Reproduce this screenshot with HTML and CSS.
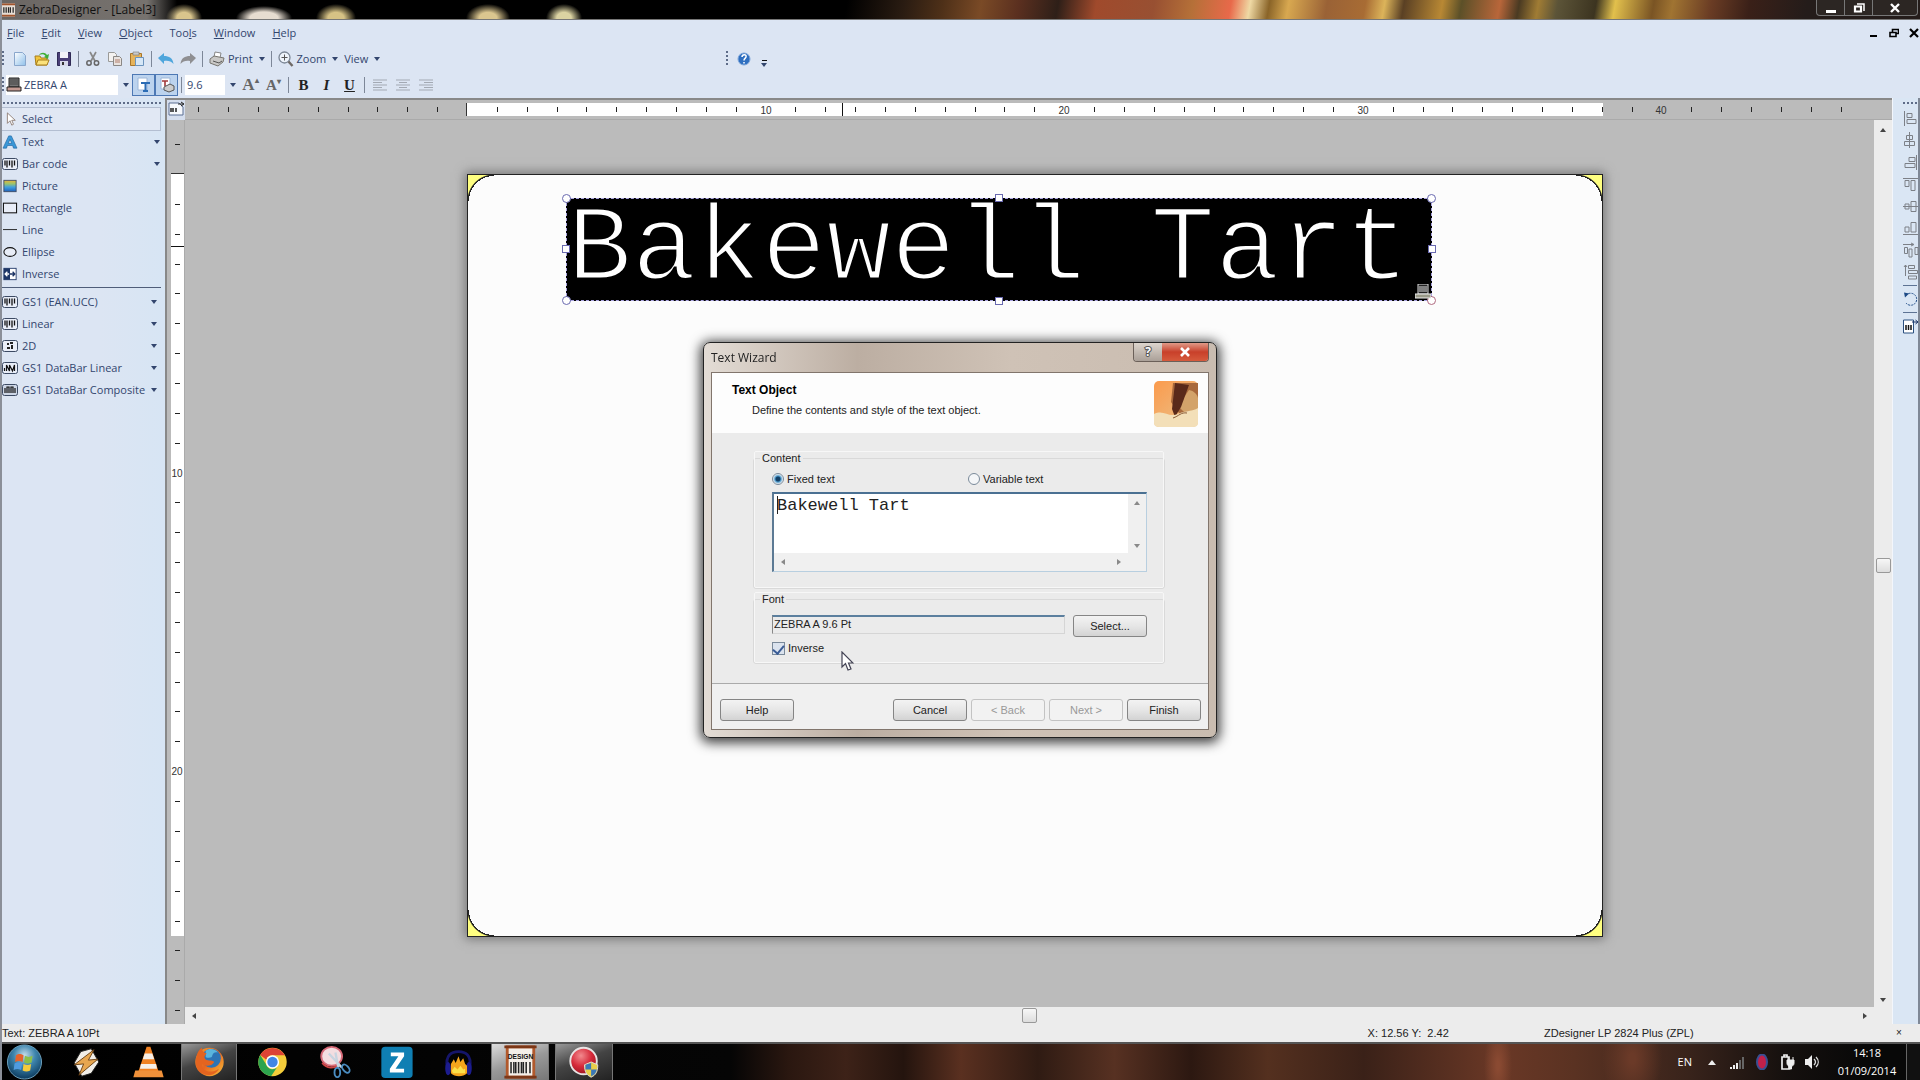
FILE: index.html
```html
<!DOCTYPE html>
<html lang="en">
<head>
<meta charset="utf-8">
<title>ZebraDesigner - [Label3]</title>
<link rel="stylesheet" href="styles.css">
</head>
<body>
<svg class="defs" aria-hidden="true">
  <defs>
    <linearGradient id="gBlue" x1="0" y1="0" x2="1" y2="1"><stop offset="0" stop-color="#fff"/><stop offset="1" stop-color="#8fc0ea"/></linearGradient>
    <linearGradient id="gPic" x1="0" y1="0" x2="0" y2="1"><stop offset="0" stop-color="#e8b23c"/><stop offset=".3" stop-color="#9cc46a"/><stop offset=".6" stop-color="#3f9fe0"/><stop offset="1" stop-color="#1f5fb8"/></linearGradient>
    <radialGradient id="gOrb" cx=".5" cy=".3" r=".7"><stop offset="0" stop-color="#c4dcea"/><stop offset=".45" stop-color="#3f86ae"/><stop offset="1" stop-color="#0b3a5e"/></radialGradient>
    <radialGradient id="gRed" cx=".4" cy=".3" r=".8"><stop offset="0" stop-color="#f28a8e"/><stop offset=".5" stop-color="#d62a3a"/><stop offset="1" stop-color="#8c0f1c"/></radialGradient>
    <linearGradient id="gFox" x1="0" y1="0" x2="1" y2="1"><stop offset="0" stop-color="#f0a032"/><stop offset=".5" stop-color="#e8641e"/><stop offset="1" stop-color="#f6c23c"/></linearGradient>
    <linearGradient id="gPen" x1="0" y1="0" x2="1" y2="1"><stop offset="0" stop-color="#fb9a4c"/><stop offset="1" stop-color="#e9c48e"/></linearGradient>
    <symbol id="barcode" viewBox="0 0 16 12"><rect x=".5" y=".5" width="15" height="11" rx="2" fill="#e9eef8" stroke="#3c4a63"/><path d="M3 2.500v5M5 2.500v7M7.500 2.500v5M10 2.500v7M12.500 2.500v5" stroke="#111" stroke-width="1.300"/></symbol>
  </defs>
</svg>
<div class="app">
  <header class="titlebar">
    <svg class="title-icon" viewBox="0 0 14 14"><rect width="14" height="14" fill="#e7ded6"/><path d="M0 1h14M0 13h14" stroke="#a3552d" stroke-width="2"/><path d="M2 4v6M4.500 4v6M7 4v6M9 4v6M12 4v6" stroke="#222" stroke-width="1.300"/></svg>
    <h1 class="title-text">ZebraDesigner - [Label3]</h1>
    <div class="win-controls">
      <button type="button" aria-label="Minimize"><svg viewBox="0 0 12 10"><path d="M1 7h10v3H1z" fill="#fff"/></svg></button>
      <button type="button" aria-label="Restore"><svg viewBox="0 0 12 10"><path d="M4 1h7v7" fill="none" stroke="#fff" stroke-width="1.500"/><path d="M2 3.500h6v5H2z" fill="none" stroke="#fff" stroke-width="2.200"/></svg></button>
      <button type="button" class="wide" aria-label="Close"><svg viewBox="0 0 12 10"><path d="M2 1l8 8M10 1L2 9" stroke="#fff" stroke-width="2.400"/></svg></button>
    </div>
  </header>

  <div class="menu-row">
    <nav class="menubar">
      <a href="#"><u>F</u>ile</a><a href="#"><u>E</u>dit</a><a href="#"><u>V</u>iew</a><a href="#"><u>O</u>bject</a><a href="#">Too<u>l</u>s</a><a href="#"><u>W</u>indow</a><a href="#"><u>H</u>elp</a>
    </nav>
    <div class="mdi">
      <button type="button" aria-label="Minimize document"><svg viewBox="0 0 10 10"><path d="M1 7h7v2H1z"/></svg></button>
      <button type="button" aria-label="Restore document"><svg viewBox="0 0 10 10"><path d="M3.500 4V1.500h6v4H7M1 4.500h6v4H1z" fill="none" stroke="#000" stroke-width="1.600"/></svg></button>
      <button type="button" aria-label="Close document"><svg viewBox="0 0 10 10"><path d="M1 1l8 8M9 1L1 9" stroke="#000" stroke-width="2.200"/></svg></button>
    </div>
  </div>

  <div class="toolbar">
    <div class="tools">
      <i class="grip"></i>
      <button type="button" class="tb" aria-label="New"><svg viewBox="0 0 16 16"><path d="M2.500 1.500h8l3 3v10h-11z" fill="url(#gBlue)" stroke="#8aa7cc"/></svg></button>
      <button type="button" class="tb" aria-label="Open"><svg viewBox="0 0 16 16"><path d="M1 5h5l1 2h6v7H2z" fill="#f2c53d" stroke="#a77e1d"/><path d="M4 9h11l-2 5H2z" fill="#fbe27c" stroke="#a77e1d"/><path d="M5 4c2-3 6-3 8 0l2-1-1 5-4-2 1.500-1C10 3 8 3 5 4z" fill="#3fae37"/></svg></button>
      <button type="button" class="tb" aria-label="Save"><svg viewBox="0 0 16 16"><path d="M1.500 1.500h13v13h-13z" fill="#4a3f77" stroke="#2f2a55"/><path d="M4 1h8v6H4z" fill="#f2f2f8"/><path d="M4 10h8v5H4z" fill="#d7d9ea"/><path d="M6 11h2v3H6z" fill="#333"/></svg></button>
      <i class="sep"></i>
      <button type="button" class="tb" aria-label="Cut"><svg viewBox="0 0 16 16"><path d="M5 1l5 9M11 1L6 10" stroke="#888" stroke-width="1.700"/><circle cx="4" cy="12" r="2.200" fill="none" stroke="#666" stroke-width="1.500"/><circle cx="11.500" cy="12" r="2.200" fill="none" stroke="#666" stroke-width="1.500"/></svg></button>
      <button type="button" class="tb" aria-label="Copy"><svg viewBox="0 0 16 16"><path d="M1.500 1.500h6l2 2v7h-8z" fill="#f4f2f0" stroke="#9a9a98"/><path d="M6.500 5.500h6l2 2v7h-8z" fill="#e9e3df" stroke="#8a8784"/><path d="M8 9h5M8 11h5" stroke="#b27f6c"/></svg></button>
      <button type="button" class="tb" aria-label="Paste"><svg viewBox="0 0 16 16"><path d="M1.500 2.500h11v12h-11z" fill="#e6b35a" stroke="#a8762b"/><path d="M4 1h6v3H4z" fill="#c9c9c9" stroke="#777" stroke-width=".6"/><path d="M6.500 6.500h8v8h-8z" fill="#d6e7f7" stroke="#6b93bd"/></svg></button>
      <i class="sep"></i>
      <button type="button" class="tb" aria-label="Undo"><svg viewBox="0 0 16 16"><path d="M0 7l6-5v3c5 0 9 2 9.500 8C13 10 10 9.500 6 10v3z" fill="#4fa6dc"/></svg></button>
      <button type="button" class="tb" aria-label="Redo"><svg viewBox="0 0 16 16"><path d="M16 7l-6-5v3C5 5 1 7 .5 13 3 10 6 9.500 10 10v3z" fill="#8f8f92"/></svg></button>
      <i class="sep"></i>
      <button type="button" class="tb"><svg viewBox="0 0 16 16"><path d="M5 6l1-5 6 1-1 5" fill="#fff" stroke="#888"/><path d="M1 8l4-3 10 2-1 4-5 4-8-3z" fill="#c9c8c6" stroke="#77756f"/><path d="M4 10l6 2 3-2" stroke="#555" fill="none"/></svg>Print<i class="caret"></i></button>
      <i class="sep"></i>
      <button type="button" class="tb"><svg viewBox="0 0 16 16"><circle cx="6.500" cy="6.500" r="5.500" fill="#eef4fb" stroke="#7c8796" stroke-width="1.300"/><path d="M3.500 6.500h6M6.500 3.500v6" stroke="#555"/><path d="M10.500 10.500l4 4.500" stroke="#6f6a66" stroke-width="2.400"/></svg>Zoom<i class="caret"></i></button>
      <button type="button" class="tb">View<i class="caret"></i></button>
    </div>
    <div class="tools help-tools">
      <i class="grip"></i>
      <button type="button" class="tb" aria-label="Help"><svg viewBox="0 0 16 16"><circle cx="8" cy="8" r="6" fill="#2f6fc0" stroke="#7ea6da"/><path d="M6 6c0-3 5-3 4 0-.5 1.500-2 1.500-2 3.500M8 11v1.500" stroke="#fff" stroke-width="1.500" fill="none"/></svg></button>
      <button type="button" class="more" aria-label="Toolbar options"><i class="caret over"></i></button>
    </div>
  </div>

  <div class="formatbar">
    <i class="grip"></i>
    <div class="combo font-combo">
      <svg viewBox="0 0 16 16"><path d="M3 1h10v9H3z" fill="#777" stroke="#222"/><path d="M4 3h8M4 5h8M4 7h8" stroke="#444"/><path d="M1 10h14v4H1z" fill="#c39a92" stroke="#222"/></svg>
      <select aria-label="Font name"><option>ZEBRA A</option></select><i class="caret"></i>
    </div>
    <button type="button" class="toggle" aria-label="Printer fonts"><svg viewBox="0 0 16 16"><path d="M2 1h9v12H2z" fill="#fff" stroke="#9cb6d8"/><path d="M5 6h9M9.500 6v8M7 14h5" stroke="#2b6cb5" stroke-width="2"/></svg></button><button type="button" class="toggle" aria-label="Windows fonts"><svg viewBox="0 0 16 16"><path d="M2 1h9v11H2z" fill="#fff" stroke="#9cb6d8"/><path d="M3 4h6M6 4v5" stroke="#a33a3a" stroke-width="1.600"/><path d="M5 10l6-3 4 2v4l-5 2-5-2z" fill="#ccc" stroke="#555"/></svg></button>
    <i class="sep"></i>
    <div class="combo size-combo"><select aria-label="Font size"><option>9.6</option></select><i class="caret"></i></div>
    <button type="button" class="fmt big" aria-label="Grow font">A<sup>▴</sup></button>
    <button type="button" class="fmt" aria-label="Shrink font">A<sup>▾</sup></button>
    <i class="sep"></i>
    <button type="button" class="fmt dark">B</button>
    <button type="button" class="fmt dark"><em>I</em></button>
    <button type="button" class="fmt dark"><u>U</u></button>
    <i class="sep"></i>
    <button type="button" class="fmt" aria-label="Align left"><svg viewBox="0 0 14 12"><path d="M0 1h14M0 3.500h9M0 6h14M0 8.500h9M0 11h14" stroke="#a3a9b3"/></svg></button>
    <button type="button" class="fmt" aria-label="Align centre"><svg viewBox="0 0 14 12"><path d="M0 1h14M3 3.500h8M0 6h14M3 8.500h8M0 11h14" stroke="#a3a9b3"/></svg></button>
    <button type="button" class="fmt" aria-label="Align right"><svg viewBox="0 0 14 12"><path d="M0 1h14M5 3.500h9M0 6h14M5 8.500h9M0 11h14" stroke="#a3a9b3"/></svg></button>
  </div>

  <main class="work">
    <aside class="toolbox">
      <i class="hgrip"></i>
      <button type="button" class="tool current"><svg viewBox="0 0 16 16"><path d="M5 1v12l3-3 2 5 2-1-2-4.500h4z" fill="#fff" stroke="#8b7a72"/></svg>Select</button>
      <button type="button" class="tool"><svg viewBox="0 0 16 16"><path d="M6.500 1h3L16 15h-4l-1-3H5l-1 3H0zM6 9.500h4L8 5z" fill="#3a98d8" stroke="#1b5f9c" stroke-width=".7"/></svg>Text<i class="caret"></i></button>
      <button type="button" class="tool"><svg viewBox="0 0 16 12"><use href="#barcode"/></svg>Bar code<i class="caret"></i></button>
      <button type="button" class="tool"><svg viewBox="0 0 16 16"><rect x="1" y="1.500" width="14" height="13" fill="url(#gPic)" stroke="#3c4a63"/></svg>Picture</button>
      <button type="button" class="tool"><svg viewBox="0 0 16 16"><rect x=".5" y="2.500" width="15" height="11" fill="#e8edf7" stroke="#111" stroke-width="1.200"/></svg>Rectangle</button>
      <button type="button" class="tool"><svg viewBox="0 0 16 16"><path d="M0 7.500h16" stroke="#111"/></svg>Line</button>
      <button type="button" class="tool"><svg viewBox="0 0 16 16"><ellipse cx="8" cy="8" rx="7" ry="5" fill="#e8edf7" stroke="#111" stroke-width="1.200"/></svg>Ellipse</button>
      <button type="button" class="tool"><svg viewBox="0 0 16 16"><rect x="1" y="1.500" width="14" height="13" fill="#fff" stroke="#1d3566"/><path d="M1 1.500h7v13H1z" fill="#1d3566"/><path d="M7 8H3M5 5.500L2.500 8 5 10.500" stroke="#fff" stroke-width="1.500" fill="none"/><path d="M8 8h5M11 5.500L13.500 8 11 10.500" stroke="#1d3566" stroke-width="1.500" fill="none"/></svg>Inverse</button>
      <hr>
      <div class="code-tools">
        <button type="button" class="tool"><svg viewBox="0 0 16 12"><use href="#barcode"/></svg>GS1 (EAN.UCC)<i class="caret"></i></button>
        <button type="button" class="tool"><svg viewBox="0 0 16 12"><use href="#barcode"/></svg>Linear<i class="caret"></i></button>
        <button type="button" class="tool"><svg viewBox="0 0 16 12"><rect x=".5" y=".5" width="15" height="11" rx="2" fill="#e9eef8" stroke="#3c4a63"/><path d="M5 3h2v2H5zM8 2h3v2H8zM5 7h3v2H5zM9 5h2v4H9z" fill="#222"/></svg>2D<i class="caret"></i></button>
        <button type="button" class="tool"><svg viewBox="0 0 16 12"><rect x=".5" y=".5" width="15" height="11" rx="2" fill="#e9eef8" stroke="#3c4a63"/><path d="M2.500 9V6M4.500 9V3l3 6V3l3 6 2-6v6" stroke="#111" fill="none" stroke-width="1.200"/></svg>GS1 DataBar Linear<i class="caret"></i></button>
        <button type="button" class="tool"><svg viewBox="0 0 16 12"><rect x=".5" y=".5" width="15" height="11" rx="2" fill="#cdd6e6" stroke="#3c4a63"/><path d="M3 9V4M5 9V3h2v6M9 9V3h2v6M13 9V4" stroke="#111" fill="none" stroke-width="1.200"/></svg>GS1 DataBar Composite<i class="caret"></i></button>
      </div>
    </aside>

    <section class="editor">
      <div class="corner"><svg viewBox="0 0 18 18"><path d="M2 3h10l4 4v8H2z" fill="#f6f8fc" stroke="#5a6e93"/><path d="M4 8v4M6 8v4M9 8v4" stroke="#222" stroke-width="1.500"/><path d="M11 4h5M14 2l3 2-3 2" stroke="#222" fill="none"/></svg></div>
      <svg class="ruler ruler-h" id="rulerH"></svg>
      <svg class="ruler ruler-v" id="rulerV"></svg>
      <div class="canvas">
        <div class="label">
          <i class="fold tl"></i><i class="fold tr"></i><i class="fold bl"></i><i class="fold br"></i>
          <div class="text-object">Bakewell Tart
            <i class="handle round n w"></i><i class="handle n c"></i><i class="handle round n e"></i>
            <i class="handle m w"></i><i class="handle m e"></i>
            <i class="handle round s w"></i><i class="handle s c"></i><i class="handle round red s e"></i>
            <svg class="printer-mark" viewBox="0 0 16 16"><path d="M3 0h10v10H3z" fill="#222" stroke="#ddd"/><path d="M4 3h8M4 5h8M4 7h8" stroke="#ddd"/><path d="M0 10h16v4H0z" fill="#998" stroke="#eee"/></svg>
          </div>
        </div>
      </div>
      <div class="scroll vertical"><i class="arrow up"></i><i class="thumb"></i><i class="arrow down"></i></div>
      <div class="scroll horizontal"><i class="arrow left"></i><i class="thumb"></i><i class="arrow right"></i></div>
    </section>

    <aside class="alignbar">
      <i class="hgrip"></i>
      <button type="button" aria-label="Align left edges"><svg viewBox="0 0 16 16"><path d="M1.500 1v15M4 3.500h5v4H4zM4 9.500h9v4H4z"/></svg></button>
      <button type="button" aria-label="Align centres"><svg viewBox="0 0 16 16"><path d="M6.500 0v16M3.500 3.500h6v4h-6zM1.500 9.500h10v4h-10z"/></svg></button>
      <button type="button" aria-label="Align right edges"><svg viewBox="0 0 16 16"><path d="M13.500 1v15M6 3.500h6v4H6zM2 9.500h10v4H2z"/></svg></button>
      <button type="button" aria-label="Align tops"><svg viewBox="0 0 16 16"><path d="M0 2.500h15M2 4.500h4v6H2zM8 4.500h4v10H8z"/></svg></button>
      <button type="button" aria-label="Align middles"><svg viewBox="0 0 16 16"><path d="M0 8.500h15M2 6h4v5H2zM8 3.500h5v10H8z"/></svg></button>
      <button type="button" aria-label="Align bottoms"><svg viewBox="0 0 16 16"><path d="M0 14.500h15M2 7h4v5H2zM8 2.500h5V12H8z"/></svg></button>
      <button type="button" aria-label="Space horizontally"><svg viewBox="0 0 16 16"><path d="M0 2.500h10M8 1l3 1.500L8 4M1.500 5.500h3v6h-3zM6 7h3v8H6zM12 5.500h3v7h-3z"/></svg></button>
      <button type="button" aria-label="Space vertically"><svg viewBox="0 0 16 16"><path d="M2.500 1v11M1 3l1.500-2L4 3M5.500 1.500h6v3h-6zM5.500 6.500h9v3h-9zM5.500 12h8v3h-8z"/></svg></button>
      <hr>
      <button type="button" aria-label="Rotate"><svg viewBox="0 0 16 16"><path class="spin" d="M3 4.500A6 6 0 1 1 3 12"/><path d="M1 1.500l5 1-4 4z" fill="#1d4a86" stroke="none"/></svg></button>
      <hr>
      <button type="button" aria-label="Label setup"><svg viewBox="0 0 16 16"><path d="M.5 2h10v13H.5z" fill="#fff" stroke="#2b5080"/><path d="M3 7v5M5.500 7v5M8 7v5" stroke="#111" stroke-width="1.500"/><path d="M9 4h6M12.500 2L15 4l-2.500 2" stroke="#1d3566"/></svg></button>
    </aside>
  </main>

  <footer class="statusbar">
    <span class="st-object">Text: ZEBRA A 10Pt</span><span class="st-pos">X: 12.56 Y:&nbsp; 2.42</span><span class="st-printer">ZDesigner LP 2824 Plus (ZPL)</span><span class="st-x">×</span>
  </footer>

  <footer class="taskbar">
    <button type="button" aria-label="Start"><svg viewBox="0 0 38 38"><circle cx="19" cy="19" r="18" fill="url(#gOrb)" stroke="#6fa3bf"/><path d="M10 12c3-2 5-1.500 8 0l-1 7c-3-1.500-5-1.500-8 0z" fill="#e5632c"/><path d="M19.500 12.500c3 1.500 5 1.500 8 0l-1 7c-3 1.500-5 1.500-8 0z" fill="#8cc04a"/><path d="M8.500 20.500c3-1.500 5-1.500 8 0l-1 7c-3-1.500-5-1.500-8 0z" fill="#4f9be0"/><path d="M18 21c3 1.500 5 1.500 8 0l-1 7c-3 1.500-5 1.500-8 0z" fill="#f6cb3c"/></svg></button>
    <button type="button" aria-label="Winamp"><svg viewBox="0 0 38 38"><path d="M13 8l11-3 8 14-8 12-10 3-8-14z" fill="#f1eee8" stroke="#222"/><path d="M27 6L6 22l10-1-5 12 20-17-10 1z" fill="#e7a650" stroke="#6b4215"/></svg></button>
    <button type="button" aria-label="VLC"><svg viewBox="0 0 38 38"><path d="M17 3h4l9 27H8z" fill="#f08122"/><path d="M15 10h8l2 6H13zM11 21h16l1 5H10z" fill="#f5efe9"/><path d="M5 28h28l2 7H3z" fill="#f0913a"/></svg></button>
    <button type="button" class="open" aria-label="Firefox"><svg viewBox="0 0 38 38"><circle cx="19" cy="19" r="15" fill="url(#gFox)"/><circle cx="21" cy="15" r="10" fill="#2d74b5"/><path d="M15 7c4-3 10-2 13 2-3-1-5 0-6 3 0 3-4 3-7 2z" fill="#5ab5dd"/><path d="M5 14c1-5 3-8 6-10 0 4 2 5 5 6-3 3-3 5 0 7 4 1 6 0 8 2-3 5-9 5-13 2-1 6 8 12 18 5-4 8-15 9-21 2C4 24 4 19 5 14z" fill="#e4641f"/></svg></button>
    <button type="button" class="after" aria-label="Chrome"><svg viewBox="0 0 38 38"><circle cx="19" cy="19" r="15" fill="#f4cd3a"/><path d="M6 11.500A15 15 0 0 1 32 12H19a7 7 0 0 0-6.500 4.500z" fill="#dd4335"/><path d="M6 11.500A15 15 0 0 0 17.500 34l6-9a7 7 0 0 1-11-3z" fill="#2da44e"/><circle cx="19" cy="19" r="7" fill="#fff"/><circle cx="19" cy="19" r="5.500" fill="#4285e4"/></svg></button>
    <button type="button" aria-label="Snipping Tool"><svg viewBox="0 0 38 38"><ellipse cx="16" cy="13" rx="11" ry="10" fill="#f3dde0" stroke="#d66a78" stroke-width="2"/><path d="M6 20c5 6 12 6 18 2" stroke="#c44" stroke-width="2" fill="none"/><path d="M13 10l14 15M20 9l3 16" stroke="#c8d4e0" stroke-width="2.500"/><ellipse cx="22" cy="30" rx="3" ry="5" fill="none" stroke="#4a8cc0" stroke-width="2"/><ellipse cx="31" cy="26" rx="3" ry="5" fill="none" stroke="#4a8cc0" stroke-width="2" transform="rotate(-40 31 26)"/></svg></button>
    <button type="button" aria-label="Zebra"><svg viewBox="0 0 38 38"><rect x="3" y="3" width="33" height="33" rx="4" fill="#0f7fb3"/><path d="M13 9h14v4l-9 13h9v4H12v-4l9-13h-8z" fill="#fff"/></svg></button>
    <button type="button" aria-label="Audacity"><svg viewBox="0 0 38 38"><path d="M7 25C5 11 12 8 19 8s14 3 12 17" fill="none" stroke="#15156a" stroke-width="3"/><ellipse cx="8" cy="26" rx="3" ry="7" fill="#1c1c8e"/><ellipse cx="30" cy="26" rx="3" ry="7" fill="#1c1c8e"/><path d="M11 31V21l3-5 2 4 3-7 2 6 3-4 2 6 2 2v8c-4 4-13 4-17 0z" fill="#f5a51c"/><path d="M12 28l3-4 3 3 3-4 3 4 2-1v5H13z" fill="#fbe04a"/></svg></button>
    <button type="button" class="open active" aria-label="ZebraDesigner"><svg viewBox="0 0 38 38"><path d="M5 3h28v32H5z" fill="#f4efe9" stroke="#b1592c" stroke-width="3"/><path d="M2 3h34M2 35h34" stroke="#7c3717" stroke-width="3"/><text x="19" y="16" text-anchor="middle" class="design-text">DESIGN</text><path d="M9 19v12M12 19v12M14 19v12M17 19v12M20 19v12M22 19v12M25 19v12M29 19v12" stroke="#222" stroke-width="1.600"/></svg></button>
    <button type="button" class="open last" aria-label="Recorder"><svg viewBox="0 0 38 38"><circle cx="18" cy="18" r="14" fill="url(#gRed)" stroke="#e8e4e4" stroke-width="2"/><path d="M19 22l7-3 7 3c0 7-2 11-7 13-5-2-7-6-7-13z" fill="#e8cf4a" stroke="#ddd"/><path d="M20 22l6-2v7h-6zM26 27h6c-1 4-3 6-6 7z" fill="#3a78b8"/></svg></button>
    <div class="tray">
      <span class="lang">EN</span>
      <svg viewBox="0 0 16 16"><path d="M4 11l4-5 4 5z" fill="#eee"/></svg>
      <svg viewBox="0 0 16 16"><path d="M1 15v-2h2v2zM4 15v-4h2v4zM7 15V9h2v6z" fill="#eee"/><path d="M10 15V6h2v9zM13 15V3h2v12z" fill="#666"/></svg>
      <svg viewBox="0 0 16 16"><ellipse cx="8" cy="8" rx="5" ry="7.500" fill="#c2204a" stroke="#3a4f92" stroke-width="2"/></svg>
      <svg viewBox="0 0 16 16"><path d="M3 3h7v12H3zM5 1h3v2H5z" fill="none" stroke="#eee" stroke-width="1.700"/><path d="M8 6h7v3c0 2-1 3-2.500 3v3h-2v-3C9 12 8 11 8 9zM9 3v3M14 3v3" fill="#eee" stroke="#eee"/></svg>
      <svg viewBox="0 0 16 16"><path d="M1 5h3l4-4v14l-4-4H1z" fill="#eee"/><path d="M10 5c2 2 2 4 0 6M12 3c3 3 3 7 0 10" stroke="#ddd" fill="none" stroke-width="1.300"/></svg>
      <time class="clock"><span>14:18</span><span>01/09/2014</span></time>
      <i class="peek"></i>
    </div>
  </footer>
</div>

<div class="overlay">
  <form class="dialog" role="dialog" aria-labelledby="dlgTitle">
    <div class="dlg-title">
      <span id="dlgTitle">Text Wizard</span>
      <div class="dlg-controls"><button type="button" class="q" aria-label="Help">?</button><button type="button" class="x" aria-label="Close"><svg viewBox="0 0 12 10"><path d="M2 1l8 8M10 1L2 9" stroke="#fff" stroke-width="2.600"/></svg></button></div>
    </div>
    <div class="dlg-body">
      <div class="dlg-head">
        <div><h2>Text Object</h2><p>Define the contents and style of the text object.</p></div>
        <svg class="dlg-art" viewBox="0 0 46 48"><rect x="1" y="1" width="44" height="46" rx="5" fill="url(#gPen)"/><path d="M20 3h25v26L28 36 18 22z" fill="#a8693c"/><path d="M36 10c5 1 8 4 9 8v12l-14 2-6-6z" fill="#d3a36a"/><path d="M22 3l14 2-8 22-6 10-3-8z" fill="#5a2a1a"/><path d="M1 34c10-5 14 4 24 0 8-4 14-2 20-6v15q0 4-5 4H6q-5 0-5-4z" fill="#f3dfb8"/><path d="M20 38c6-2 8-6 14-5" stroke="#8a5a35" fill="none"/></svg>
      </div>
      <div class="dlg-main">
        <fieldset class="content-group">
          <legend>Content</legend>
          <div class="radios">
            <label><input type="radio" name="kind" checked>Fixed text</label>
            <label><input type="radio" name="kind">Variable text</label>
          </div>
          <div class="memo">
            <textarea aria-label="Text content" spellcheck="false">Bakewell Tart</textarea>
            <div class="memo-v"><i class="arrow up"></i><i class="arrow down"></i></div>
            <div class="memo-h"><i class="arrow left"></i><i class="arrow right"></i></div>
          </div>
        </fieldset>
        <fieldset class="font-group">
          <legend>Font</legend>
          <div class="font-row"><input type="text" aria-label="Font" value="ZEBRA A 9.6 Pt" readonly><button type="button">Select...</button></div>
          <label class="inverse"><input type="checkbox" checked>Inverse</label>
        </fieldset>
      </div>
      <div class="dlg-foot">
        <button type="button" class="first">Help</button><button type="button">Cancel</button><button type="button" disabled>&lt; Back</button><button type="button" disabled>Next &gt;</button><button type="button">Finish</button>
      </div>
    </div>
    <svg class="pointer" viewBox="0 0 13 20"><path d="M1 1v15l3.500-3.500L7 19l3-1-2.500-6H12z" fill="#fff" stroke="#445" stroke-width="1.200"/></svg>
  </form>
</div>
<script src="rulers.js"></script>
</body>
</html>
```
FILE: styles.css
```css
* { box-sizing: border-box; }
body { margin: 0; font: 11px/16px "Open Sans", "Noto Sans", sans-serif; color: #33466e; background: #000; overflow: hidden; }
button, select, input, textarea { font: inherit; color: inherit; margin: 0; }
button { border: 0; background: none; padding: 0; }
svg { display: block; flex: none; }
.defs { position: absolute; width: 0; height: 0; }
.app { display: flex; flex-direction: column; height: 100vh; border-left: 2px solid #8b8f98; }
.titlebar, .menu-row, .toolbar, .formatbar, .statusbar, .taskbar { flex: none; display: flex; align-items: center; }

.titlebar { height: 20px; border-bottom: 1px solid #777; overflow: hidden;
  background:
    linear-gradient(90deg, #6b6663, #77736f 145px, transparent 175px),
    radial-gradient(ellipse 18px 14px at 182px 18px, #d9c58c 40%, transparent),
    radial-gradient(ellipse 28px 12px at 262px 18px, #e6dcd0 50%, transparent),
    radial-gradient(ellipse 20px 14px at 334px 18px, #d6c285 40%, transparent),
    radial-gradient(ellipse 22px 14px at 486px 18px, #dbc68f 40%, transparent),
    radial-gradient(ellipse 18px 14px at 562px 18px, #dbd3a2 40%, transparent),
    linear-gradient(100deg, #000 0, #000 44%, #2a1c12 47%, #4e3018 49%, #7a4a26 51%, #5a2f1f 53%, #2e1f18 55%, #a04a2c 57%, #985032 60%, #b57038 62%, #e8694a 64%, #efd9a4 65%, #8a6428 66%, #d8a850 67%, #9a6236 69%, #a86c34 71%, #dcb45a 72%, #5a4024 73%, #b88834 75%, #5c5028 76%, #b8663a 78%, #4a3a22 79%, #a07c34 80%, #5c5438 81%, #3c3420 83%, #e2c04c 84%, #7a5424 86%, #a07432 87%, #6a3c24 89%, #3a2018 91%, #241c1a 94%); }
.title-icon { width: 13px; height: 14px; }
.title-text { flex: 1; margin: 0 4px; font: 12px/16px "Open Sans", sans-serif; color: #111; }
.win-controls { display: flex; align-self: flex-start; height: 16px; margin-right: 2px; border: 1px solid #777; border-top: 0; border-radius: 0 0 4px 4px; background: #2c2623; }
.win-controls button { width: 28px; display: grid; place-items: center; border-right: 1px solid #777; }
.win-controls .wide { width: 44px; border: 0; }
.win-controls svg { width: 12px; height: 10px; }

.menu-row, .toolbar, .formatbar { background: #dce5f3; }
.menu-row { height: 26px; justify-content: space-between; padding-left: 5px; }
.menubar { display: flex; gap: 17px; }
.menubar a { color: inherit; text-decoration: none; }
.mdi { display: flex; gap: 10px; padding-right: 1px; }
.mdi svg { width: 10px; height: 10px; }

.toolbar { height: 26px; }
.tools { display: flex; align-items: center; gap: 6px; }
.tools:first-child { width: 38%; }
.help-tools { margin-left: -5px; }
.grip { width: 2px; height: 16px; margin-right: 2px; background: repeating-linear-gradient(#5e6c88 0 2px, transparent 2px 4px); flex: none; }
.sep { width: 1px; height: 16px; background: #7d8798; flex: none; }
.tb { display: flex; align-items: center; gap: 3px; }
.tb svg { width: 16px; height: 16px; }
.caret { width: 0; height: 0; border: 3px solid transparent; border-top: 4px solid #33466e; border-bottom: 0; margin: 0 3px; }
.tb .caret { margin: 0 0 0 3px; }
.more { align-self: flex-end; }
.over { display: block; }
.over::before { content: ""; display: block; width: 5px; height: 1px; margin: -7px 0 0 -2px; background: #111; }

.formatbar { height: 26px; }
.formatbar .sep { margin: 0 3px; }
.combo { display: flex; align-items: center; height: 20px; background: linear-gradient(90deg, #fff calc(100% - 14px), #dce5f3 0); }
.combo select { flex: 1; min-width: 0; appearance: none; border: 0; background: none; padding: 0 2px; outline: 0; }
.combo svg { width: 16px; height: 16px; }
.font-combo { width: 126px; }
.size-combo { width: 54px; }
.toggle { width: 23px; height: 22px; display: grid; place-items: center; border: 1px solid #4d78b4; background: #bcd3ee; }
.toggle svg { width: 16px; height: 16px; }
.fmt { width: 23px; font: 700 15px/20px "Liberation Serif", serif; color: #666; text-align: center; }
.fmt.big { font-size: 17px; }
.fmt.dark { color: #222; }
.fmt sup { font-size: 8px; line-height: 8px; }
.fmt svg { width: 14px; height: 12px; margin: auto; }

.work { flex: 1; min-height: 0; display: grid; grid-template-columns: 163px 1fr 28px; }
.toolbox { display: flex; flex-direction: column; background: linear-gradient(90deg, #dce5f3 60%, #d7e5f4); padding: 4px 4px 0 0; }
.hgrip { height: 2px; margin: 0 0 3px 1px; background: repeating-linear-gradient(90deg, #5e6c88 0 2px, transparent 2px 4px); }
.tool { display: flex; align-items: center; width: 100%; height: 22px; gap: 4px; text-align: left; white-space: nowrap; }
.tool svg { width: 16px; height: 14px; }
.tool .caret { margin: 0 1px 0 auto; }
.tool.current { height: 24px; border: 1px solid #b3bed1; border-left: 0; background: #e1e8f4; }
.toolbox hr { width: 100%; margin: 2px 0 3px; border: 0; border-top: 1px solid #4f5d79; }
.code-tools { padding-right: 3px; }

.editor { display: grid; grid-template: 20px 1fr 17px / 18px 1fr 18px; background: #bbb; border-top: 2px solid #888; border-left: 2px solid #888; min-width: 0; }
.corner { background: #d5deee; }
.corner svg { width: 18px; height: 18px; }
.ruler { width: 100%; height: 100%; min-height: 0; overflow: hidden; background: #bbb; }
.ruler text { font: 10px "Liberation Sans", sans-serif; fill: #333; text-anchor: middle; }
.ruler-h { grid-area: 1 / 2 / 2 / 4; border-bottom: 1px solid #aaa; }
.ruler-v { grid-area: 2 / 1 / 4 / 2; border-right: 1px solid #aaa; }
.canvas { grid-area: 2 / 2; position: relative; overflow: hidden; background: #bbb; }
.label { position: absolute; left: 282px; top: 54px; width: 1136px; height: 763px; background: #fcfcfc; border: 1px solid #222; box-shadow: 0 0 10px 2px #777; overflow: hidden; }
.fold { position: absolute; width: 26px; height: 26px; }
.tl { left: 0; top: 0; background: radial-gradient(circle at 100% 100%, transparent 25px, #222 25px 26px, #ffff80 27px); }
.tr { right: 0; top: 0; background: radial-gradient(circle at 0 100%, transparent 25px, #222 25px 26px, #ffff80 27px); }
.bl { left: 0; bottom: 0; background: radial-gradient(circle at 100% 0, transparent 25px, #222 25px 26px, #ffff80 27px); }
.br { right: 0; bottom: 0; background: radial-gradient(circle at 0 0, transparent 25px, #222 25px 26px, #ffff80 27px); }
.text-object { position: absolute; left: 98px; top: 23px; width: 866px; height: 103px; background: #000; border: 1px dashed #a9a3e0; color: #fff; font: 108px/102px "Liberation Mono", monospace; white-space: nowrap; -webkit-text-stroke: 3px #000; }
.handle { position: absolute; width: 8px; height: 8px; background: #fff; border: 1px solid #6a6ab0; }
.round { border-radius: 50%; width: 9px; height: 9px; }
.red { border-color: #b06a80; }
.n { top: -5px; } .m { top: 46px; } .s { bottom: -5px; }
.w { left: -5px; } .c { left: 428px; } .e { right: -5px; }
.printer-mark { position: absolute; right: 0; bottom: 0; width: 16px; height: 16px; }

.scroll { display: flex; align-items: center; justify-content: space-between; background: #ececec; }
.vertical { grid-area: 2 / 3 / 4 / 4; flex-direction: column; padding: 8px 0 22px; }
.horizontal { grid-area: 3 / 2; padding: 0 7px; }
.thumb { width: 15px; height: 15px; border: 1px solid #999; border-radius: 2px; background: linear-gradient(#f7f7f7, #ddd); }
.arrow { width: 0; height: 0; border: 3px solid transparent; }
.arrow.up { border-top: 0; border-bottom: 4px solid #444; }
.arrow.down { border-bottom: 0; border-top: 4px solid #444; }
.arrow.left { border-left: 0; border-right: 4px solid #444; }
.arrow.right { border-right: 0; border-left: 4px solid #444; }

.alignbar { display: flex; flex-direction: column; background: #dae6f4; border-left: 1px solid #f3f6fb; border-right: 2px solid #7f8896; padding: 4px 1px 0 10px; }
.alignbar .hgrip { margin: 0 0 3px; }
.alignbar button { height: 22px; }
.alignbar svg { width: 16px; height: 16px; fill: none; stroke: #7c8087; }
.alignbar .spin { stroke: #1d4a86; stroke-dasharray: 2 1; }
.alignbar hr { width: 100%; margin: 2px 0; border: 0; border-top: 1px solid #5d7394; }

.statusbar, .dialog { font: 11px/16px "Liberation Sans", Arial, sans-serif; color: #222; }
.statusbar { height: 18px; background: #ececec; }
.st-object { width: 71.2%; }
.st-pos { width: 9.2%; }
.st-printer { flex: 1; }
.st-x { width: 24px; font-size: 10px; }

.taskbar { height: 38px; border-top: 2px solid #555; padding-left: 3px; gap: 24px;
  background:
    radial-gradient(ellipse 14px 40px at 78% 60%, #8a4a32 10%, transparent),
    radial-gradient(ellipse 30px 50px at 85% 40%, #6b3a28 10%, transparent),
    linear-gradient(90deg, #000 0, #050505 38%, #2a1710 41%, #3d2218 44%, #24140e 47%, #5a3020 50%, #2f1b13 54%, #573122 58%, #2c1811 62%, #54301f 66%, #3a2118 71%, #6a3826 78%, #5a3222 82%, #38231b 88%, #15100e 93%, #080808 97%); }
.taskbar > button { width: 38px; height: 36px; display: grid; place-items: center; }
.taskbar > button svg { width: 37px; height: 36px; }
.taskbar > .open { width: 56px; margin: 0 -10px; border: 1px solid #777; border-width: 0 1px; background: linear-gradient(160deg, #999, #444 45%, #222); }
.taskbar > .after { margin-left: 2px; }
.taskbar > .active { width: 58px; background: linear-gradient(160deg, #ddd, #999 50%, #777); }
.taskbar > .open.last { width: 58px; margin: 0 0 0 -8px; }
.design-text { font: 700 7px "Liberation Sans", sans-serif; fill: #111; }
.tray { margin-left: auto; display: flex; align-items: center; gap: 9px; height: 100%; color: #fff; }
.tray svg { width: 16px; height: 16px; }
.lang { margin-right: 3px; }
.clock { display: flex; flex-direction: column; align-items: center; width: 60px; line-height: 18px; margin-left: 8px; }
.peek { width: 14px; height: 100%; border-left: 1px solid #666; background: #111; }

.overlay { position: fixed; inset: 0; display: grid; place-items: center; }
.dialog { position: relative; width: 514px; height: 396px; display: flex; flex-direction: column; padding: 0 7px 7px; border: 1px solid #222; border-radius: 7px; background: linear-gradient(90deg, #e3dcd5, #bcaea2 30%, #cfc2b6 60%, #c9bcb0); box-shadow: 0 2px 12px 3px #444; }
.dlg-title { display: flex; justify-content: space-between; align-items: center; height: 29px; font: 12px/16px "Open Sans", sans-serif; }
.dlg-controls { display: flex; align-self: flex-start; height: 19px; border: 1px solid #6b6059; border-top: 0; border-radius: 0 0 4px 4px; overflow: hidden; }
.q { width: 28px; font-weight: 700; color: #fff; background: linear-gradient(#ddd5cd, #aaa098); -webkit-text-stroke: 2px #555; paint-order: stroke; }
.x { width: 46px; display: grid; place-items: center; background: linear-gradient(#e09a88, #c8402a 50%, #d65a3c); }
.x svg { width: 12px; height: 10px; }
.dlg-body { flex: 1; display: flex; flex-direction: column; border: 1px solid #81756c; background: #ebebeb; }
.dlg-head { display: flex; justify-content: space-between; height: 60px; padding: 7px 9px 0 20px; background: #fdfdfd; }
.dlg-head h2 { margin: 2px 0 4px; font-size: 12px; line-height: 16px; color: #000; }
.dlg-head p { margin: 0 0 0 20px; }
.dlg-art { width: 46px; height: 48px; }
.dlg-main { flex: 1; padding: 17px 43px 0 41px; }
fieldset { min-width: 0; margin: 0; padding: 0 17px 0 18px; border: 1px solid #d9d9d9; border-radius: 3px; outline: 1px solid #f7f7f7; outline-offset: -2px; }
legend { padding: 0 2px; margin-left: -12px; }
.content-group { height: 139px; }
.font-group { height: 73px; margin-top: 2px; }
.radios { display: flex; height: 26px; align-items: center; }
label { display: flex; align-items: center; gap: 3px; }
.radios label:first-child { width: 196px; }
.radios input, .inverse input { appearance: none; width: 12px; height: 12px; border: 1px solid #7a8a9a; background: #f4f6f8; }
.radios input { border-radius: 50%; }
.radios input:checked { background: radial-gradient(circle, #123f66 0 2px, #4f9acb 3px, #f4f6f8 5px); }
.inverse input:checked::before { content: ""; display: block; width: 5px; height: 9px; margin: 0 auto; border: solid #3a5c96; border-width: 0 2px 2px 0; rotate: 40deg; }
.memo { display: grid; grid-template: 1fr 18px / 1fr 18px; height: 80px; border: 1px solid #b8cfe0; border-top: 2px solid #4a7092; border-left: 2px solid #5c7a94; background: #f0f0f0; }
.memo textarea { width: 100%; min-width: 0; resize: none; border: 0; outline: 0; overflow: hidden; padding: 2px 3px 0; font: 17px/20px "Liberation Mono", monospace; color: #222; background: linear-gradient(#222, #222) 3px 2px / 1px 18px no-repeat, #fff; }
.memo-v { display: flex; flex-direction: column; justify-content: space-between; align-items: center; padding: 7px 0 5px; }
.memo-h { display: flex; justify-content: space-between; align-items: center; padding: 0 7px; }
.memo .arrow { opacity: .6; }
.font-row { display: flex; justify-content: space-between; align-items: flex-start; padding-top: 8px; }
.font-row input { width: 293px; height: 19px; padding: 0 1px 2px; border: 1px solid #d5d5d5; border-top: 2px solid #5b7f9e; border-left-color: #888; background: #ebebeb; outline: 0; }
.inverse { margin-top: 3px; }
.inverse input { width: 13px; height: 13px; background: #dbe3ee; }
.font-row button, .dlg-foot button { width: 74px; height: 22px; border: 1px solid #858585; border-radius: 3px; background: linear-gradient(#f3f3f3, #e6e6e6 50%, #d3d3d3); }
.dlg-foot { display: flex; gap: 4px; height: 46px; padding: 15px 7px 0 8px; border-top: 1px solid #aaa; background: #f0f0f0; }
.dlg-foot .first { margin-right: auto; }
.dlg-foot button:disabled { color: #999; border-color: #c3c3c3; background: #f2f2f2; }
.pointer { position: absolute; left: 137px; top: 308px; width: 13px; height: 20px; }
```
FILE: rulers.js
```js
const NS = "http://www.w3.org/2000/svg";
const UNIT = 29.86;

function add(svg, name, attrs, text) {
  const el = document.createElementNS(NS, name);
  for (const key in attrs) el.setAttribute(key, attrs[key]);
  if (text !== undefined) el.textContent = text;
  svg.append(el);
}

function drawRuler(svg, vertical, zero, extent, marker, from, to) {
  const box = (pos, cross, len, thick, fill) => add(svg, "rect", vertical
    ? { x: cross, y: pos, width: thick, height: len, fill }
    : { x: pos, y: cross, width: len, height: thick, fill });
  const edge = vertical ? 4 : 3;
  box(zero, edge, extent, 13, "#fff");
  box(zero - 1, edge, 1, 13, "#333");
  for (let i = from; i <= to; i++) {
    const pos = Math.round(zero + i * UNIT);
    if (i !== 0 && i % 10 === 0) {
      add(svg, "text", vertical ? { x: 10, y: pos + 4 } : { x: pos, y: 14 }, i);
    } else if (i !== 0) {
      box(pos, vertical ? 8 : 7, 1, 5, "#222");
    }
  }
  box(marker, edge, 1, 13, "#111");
}

drawRuler(document.getElementById("rulerH"), false, 282, 1136, 657, -9, 46);
drawRuler(document.getElementById("rulerV"), true, 54, 762, 126, -1, 28);
```
